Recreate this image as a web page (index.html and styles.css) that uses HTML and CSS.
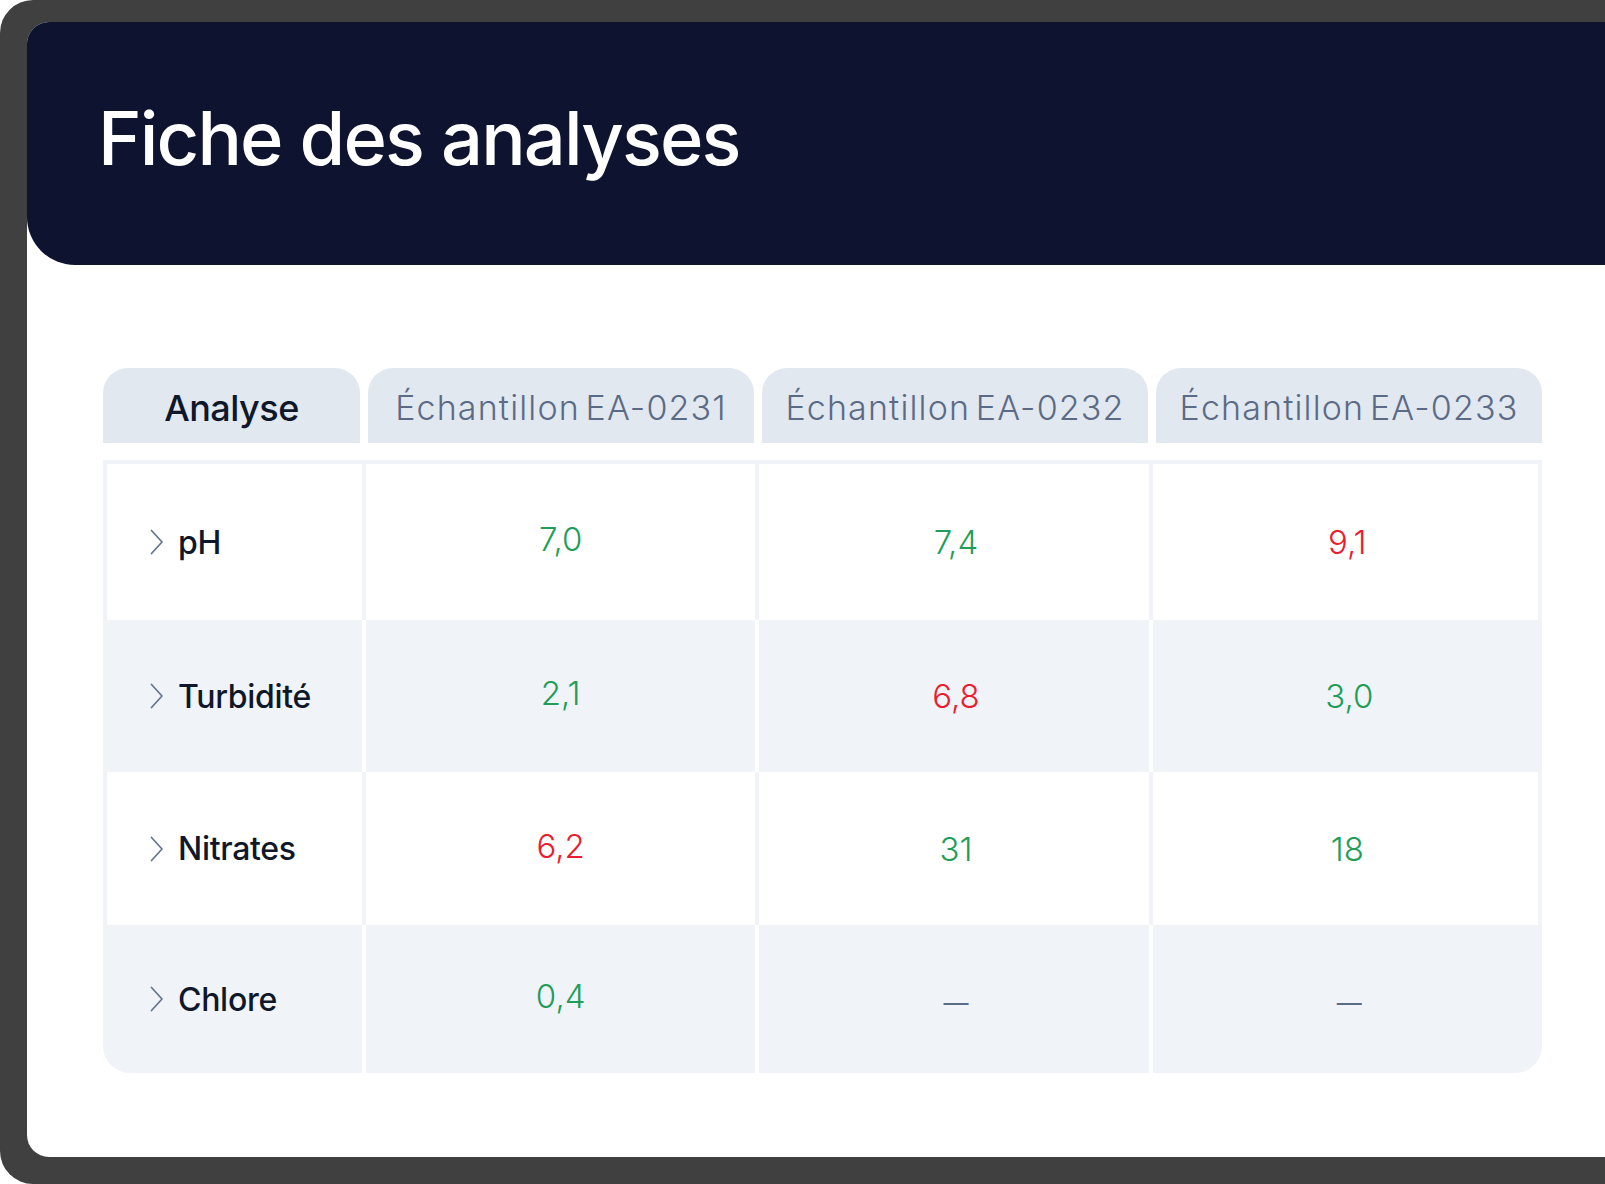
FILE: index.html
```html
<!DOCTYPE html>
<html lang="fr">
<head>
<meta charset="utf-8">
<title>Fiche des analyses</title>
<link rel="stylesheet" href="styles.css">
</head>
<body>
<div class="frame">
  <div class="panel">
    <header class="hero">
      <h1 class="title">Fiche des analyses</h1>
    </header>
    <section class="sheet">
      <div class="tabs">
        <div class="tab tab-main">Analyse</div>
        <div class="tab">Échantillon EA-0231</div>
        <div class="tab">Échantillon EA-0232</div>
        <div class="tab">Échantillon EA-0233</div>
      </div>
      <div class="grid">
        <div class="row row-white row-first">
          <div class="cell label"><svg class="chev" viewBox="0 0 14 26" width="14" height="26"><polyline points="1.5,1.5 12,13 1.5,24.5"/></svg><span>pH</span></div>
          <div class="cell val ok">7,0</div>
          <div class="cell val ok">7,4</div>
          <div class="cell val bad">9,1</div>
        </div>
        <div class="row row-light row-2">
          <div class="cell label"><svg class="chev" viewBox="0 0 14 26" width="14" height="26"><polyline points="1.5,1.5 12,13 1.5,24.5"/></svg><span>Turbidité</span></div>
          <div class="cell val ok">2,1</div>
          <div class="cell val bad">6,8</div>
          <div class="cell val ok">3,0</div>
        </div>
        <div class="row row-white row-3">
          <div class="cell label"><svg class="chev" viewBox="0 0 14 26" width="14" height="26"><polyline points="1.5,1.5 12,13 1.5,24.5"/></svg><span>Nitrates</span></div>
          <div class="cell val bad">6,2</div>
          <div class="cell val ok">31</div>
          <div class="cell val ok">18</div>
        </div>
        <div class="row row-light row-4">
          <div class="cell label"><svg class="chev" viewBox="0 0 14 26" width="14" height="26"><polyline points="1.5,1.5 12,13 1.5,24.5"/></svg><span>Chlore</span></div>
          <div class="cell val ok">0,4</div>
          <div class="cell val none">—</div>
          <div class="cell val none">—</div>
        </div>
      </div>
    </section>
  </div>
</div>
</body>
</html>
```
FILE: styles.css
```css
* { box-sizing: border-box; }
html, body {
  margin: 0;
  padding: 0;
  background: #ffffff;
  overflow: hidden;
  width: 1605px;
  height: 1184px;
}
body {
  font-family: "Inter", "Noto Sans", sans-serif;
  color: #0f172a;
}
.frame {
  width: 1605px;
  height: 1184px;
  background: #404040;
  border-radius: 33px 0 0 33px;
  padding: 22px 0 27px 27px;
}
.panel {
  height: 100%;
  background: #ffffff;
  border-radius: 22px 0 0 22px;
  display: flex;
  flex-direction: column;
}
.hero {
  height: 243px;
  background: #0e1330;
  border-radius: 22px 0 0 48px;
  padding: 79px 0 0 71px;
}
.title {
  margin: 0;
  font-size: 74px;
  line-height: 74px;
  font-weight: 500;
  color: #ffffff;
  letter-spacing: -1.85px;
}
.sheet {
  margin: 103px 0 0 76px;
  width: 1439px;
}
.tabs {
  display: grid;
  grid-template-columns: 257px repeat(3, 1fr);
  gap: 8px;
  height: 75px;
}
.tab {
  background: #e2e8f0;
  border-radius: 25px 25px 0 0;
  display: flex;
  align-items: center;
  justify-content: center;
  padding-top: 4px;
  font-size: 34px;
  font-weight: 300;
  color: #5b6b86;
  letter-spacing: 1.15px;
  word-spacing: -5px;
}
.tab-main {
  font-size: 36px;
  font-weight: 500;
  color: #0f172a;
  letter-spacing: -0.5px;
  word-spacing: 0;
}
.grid {
  margin-top: 17px;
  background: #f0f4f8;
  border-radius: 0 0 27px 27px;
  overflow: hidden;
}
.row {
  display: grid;
  grid-template-columns: 259px repeat(3, 1fr);
  gap: 4px;
}
.row-white { background: #f0f4f8; }
.row-light { background: #ffffff; }
.row-white .cell { background: #ffffff; }
.row-light .cell { background: #f0f4f8; }
.row-white .cell:first-child { border-left: 4px solid #f0f4f8; }
.row-white .cell:last-child { border-right: 4px solid #f0f4f8; }
.row-first .cell { border-top: 4px solid #f0f4f8; }
.row-first { height: 160px; }
.row-2 { height: 152px; }
.row-3 { height: 153px; }
.row-4 { height: 148px; }
.cell {
  display: flex;
  align-items: center;
}
.label {
  padding-left: 47px;
  gap: 14px;
  font-size: 32px;
  font-weight: 500;
  color: #0f172a;
  letter-spacing: -0.3px;
}
.row-white .label { padding-left: 43px; }
.chev {
  fill: none;
  stroke: #64748b;
  stroke-width: 1.7;
  stroke-linecap: round;
  stroke-linejoin: round;
  flex: none;
}
.val {
  justify-content: center;
  font-size: 33px;
  font-weight: 300;
  padding-left: 4px;
}
.val:nth-child(2) { padding-bottom: 6px; padding-left: 0; }
.ok { color: #1f9d59; }
.bad { color: #ec1c2e; }
.none {
  color: #5b6b86;
  font-size: 25px;
  font-weight: 400;
  padding-top: 8px;
}
```
